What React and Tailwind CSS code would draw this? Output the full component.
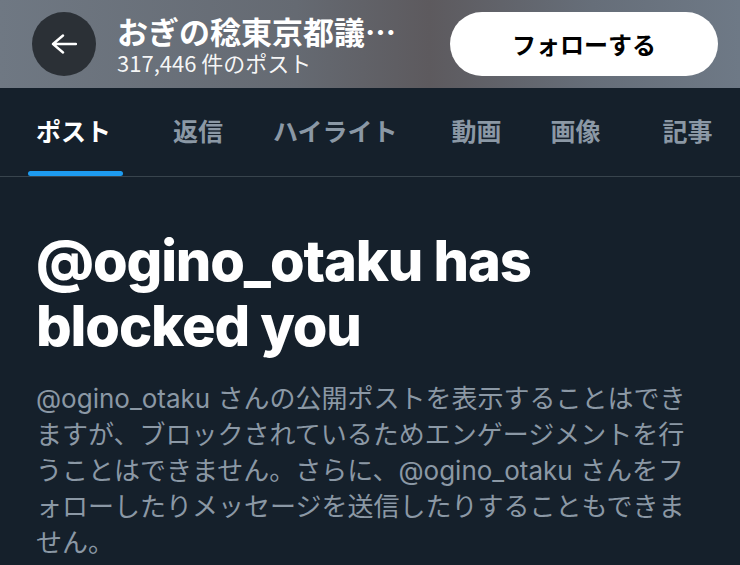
const jp = "font-['Noto_Sans_CJK_JP',sans-serif]";

const tabs = [
  { label: "ポスト", active: true, gap: "ml-[36px]" },
  { label: "返信", gap: "ml-[62px]" },
  { label: "ハイライト", gap: "ml-[50px]" },
  { label: "動画", gap: "ml-[54px]" },
  { label: "画像", gap: "ml-[49px]" },
  { label: "記事", gap: "ml-[62px]" },
];

const App = () => {
  return (
    <div className={`w-[740px] min-h-screen bg-[#15202b] ${jp}`}>
      {/* Header over blurred banner */}
      <div className="h-[88px] flex items-center pl-[32px] pr-[22px] bg-[linear-gradient(90deg,#6f7883_0%,#656a72_40%,#5d5a5e_58%,#666e79_80%,#6e7986_100%)]">
        <div className="w-[64px] h-[64px] rounded-full bg-[#2b3036] flex items-center justify-center flex-shrink-0">
          <svg width="26" height="20" viewBox="0 0 26 20" fill="none">
            <path
              d="M12 1.5 L2 10 L12 18.5 M2 10 H25"
              stroke="#ffffff"
              strokeWidth="2.4"
              strokeLinecap="round"
              strokeLinejoin="round"
            />
          </svg>
        </div>
        <div className="ml-[21px] w-[296px] flex flex-col">
          <div className="text-[31px] leading-[36px] font-bold text-white truncate">
            おぎの稔東京都議会議員
          </div>
          <div className="text-[22px] leading-[26px] text-white/95">
            317,446 件のポスト
          </div>
        </div>
        <button className="ml-auto w-[268px] h-[64px] rounded-full bg-white text-black text-[24px] font-bold flex items-center justify-center">
          フォローする
        </button>
      </div>

      {/* Tabs */}
      <div className="h-[89px] flex items-stretch border-b border-[#38444d]">
        {tabs.map((tab) => (
          <div
            key={tab.label}
            className={`${tab.gap} relative flex items-center text-[25px] font-bold whitespace-nowrap ${
              tab.active ? "text-white" : "text-[#8b98a5]"
            }`}>
            <span className="-mt-[2px]">{tab.label}</span>
            {tab.active && (
              <div className="absolute bottom-0 -left-[8px] -right-[12px] h-[5px] rounded-full bg-[#1d9bf0]" />
            )}
          </div>
        ))}
      </div>

      {/* Blocked message */}
      <div className="px-[36px] pt-[52px]">
        <h1 className="font-['Inter',sans-serif] text-[56px] leading-[65px] font-extrabold tracking-[-0.02em] text-white">
          @ogino_otaku has blocked you
        </h1>
        <p className="mt-[22px] font-['Inter','Noto_Sans_CJK_JP',sans-serif] text-[26px] leading-[36px] text-[#8b98a5]">
          @ogino_otaku さんの公開ポストを表示することはできますが、ブロックされているためエンゲージメントを行うことはできません。さらに、@ogino_otaku さんをフォローしたりメッセージを送信したりすることもできません。
        </p>
      </div>
    </div>
  );
};

export default App;
